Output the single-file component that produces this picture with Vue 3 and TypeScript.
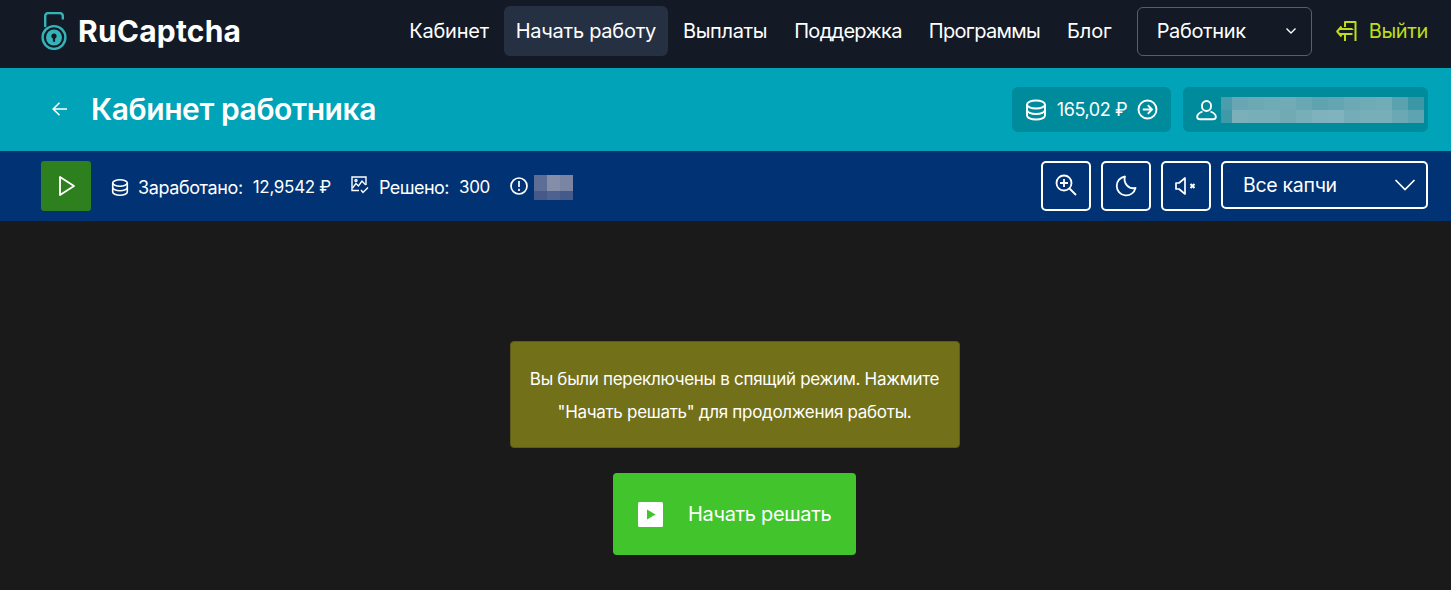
<script setup lang="ts">
const navItems = ['Кабинет', 'Начать работу', 'Выплаты', 'Поддержка', 'Программы', 'Блог']
const nameBlur: string[] = [
  '#4c9dab','#67a6b2','#6ca9b3','#6fabb5','#71abb5','#69a8b2','#5fa3af','#63a5b1','#6ca9b4','#6fabb5','#72acb6','#5ba2af','#3b97a6',
  '#3f9aa8','#7bb0b9','#77aeb8','#77aeb8','#72aab4','#78aeb8','#7fb2bc','#80b3bd','#74acb7','#77aeb8','#77aeb8','#6ba8b4','#5ea3b0',
]
const idBlur: string[] = ['#5c6e95','#858ea9','#7a85a3','#46598a','#4f618f','#465a89']
</script>

<template>
  <div class="page">
    <header class="topbar">
      <div class="brand">
        <svg class="logo" width="26" height="38" viewBox="0 0 26 38" fill="none">
          <path d="M4.2 14 V4 a3 3 0 0 1 3-3 h11.6 a3 3 0 0 1 3 3 v2.5" stroke="#35b3b8" stroke-width="2.4" stroke-linecap="round" />
          <circle cx="13" cy="25.5" r="11.4" stroke="#35b3b8" stroke-width="2.4" />
          <circle cx="13" cy="25.5" r="8" fill="#35b3b8" />
          <circle cx="13" cy="24" r="2.6" fill="#131a25" />
          <rect x="11.9" y="24" width="2.2" height="5.8" fill="#131a25" />
        </svg>
        <span class="brand-name">RuCaptcha</span>
      </div>
      <nav class="nav">
        <a v-for="(item, i) in navItems" :key="item" class="nav-item" :class="{ active: i === 1 }">{{ item }}</a>
      </nav>
      <div class="role">
        <span>Работник</span>
        <svg width="12" height="8" viewBox="0 0 12 8" fill="none"><path d="M1.5 1.5 L6 6 L10.5 1.5" stroke="#fff" stroke-width="1.4" /></svg>
      </div>
      <a class="logout">
        <svg width="22" height="22" viewBox="0 0 22 22" fill="none" stroke="#bfdc1c" stroke-width="2">
          <path d="M9 7 V2 H19.5 V21" stroke-linejoin="round" />
          <path d="M16.5 9 H4 M16.5 14 H4 M9 14 V21 M16.5 9 V10" />
          <path d="M5.5 6.5 L1.2 11.5 L5.5 16.5" stroke-linejoin="round" />
        </svg>
        <span>Выйти</span>
      </a>
    </header>

    <section class="cabinet">
      <div class="cabinet-left">
        <svg width="18" height="16" viewBox="0 0 18 16" fill="none" stroke="#fff" stroke-width="1.6"><path d="M16 8 H2.5 M8.5 1.8 L2.2 8 L8.5 14.2" /></svg>
        <h1>Кабинет работника</h1>
      </div>
      <div class="cabinet-right">
        <div class="chip balance">
          <svg width="22" height="22" viewBox="0 0 22 22" fill="none" stroke="#fff" stroke-width="1.9">
            <ellipse cx="11" cy="5.5" rx="9" ry="4" />
            <path d="M2 5.5 V16.5 C2 18.7 6 20.5 11 20.5 C16 20.5 20 18.7 20 16.5 V5.5" />
            <path d="M2 11 C2 13.2 6 15 11 15 C16 15 20 13.2 20 11" />
          </svg>
          <span>165,02 ₽</span>
          <svg width="21" height="21" viewBox="0 0 21 21" fill="none" stroke="#fff" stroke-width="1.9">
            <circle cx="10.5" cy="10.5" r="9" />
            <path d="M5.8 10.5 H14.5 M10.8 6.2 L15 10.5 L10.8 14.8" />
          </svg>
        </div>
        <div class="chip user">
          <svg width="21" height="22" viewBox="0 0 21 22" fill="none" stroke="#fff" stroke-width="1.9">
            <path d="M6 6.5 a4.5 4.5 0 0 1 9 0 v1 a4.5 4.5 0 0 1 -9 0 z" />
            <path d="M6.5 12.5 C3 14 1 16 1.2 18 C1.3 19.5 2.5 20.3 4 20.3 H17 C18.5 20.3 19.7 19.5 19.8 18 C20 16 18 14 14.5 12.5" />
          </svg>
          <div class="name-blur">
            <i v-for="(c, i) in nameBlur" :key="i" :style="{ background: c }"></i>
          </div>
        </div>
      </div>
    </section>

    <section class="toolbar">
      <button class="play-square">
        <svg width="18" height="22" viewBox="0 0 18 22" fill="none" stroke="#fff" stroke-width="1.9" stroke-linejoin="round"><path d="M2 2 L16 11 L2 20 Z" /></svg>
      </button>
      <div class="stats">
        <div class="stat first">
          <svg width="18" height="17" viewBox="0 0 22 21" fill="none" stroke="#fff" stroke-width="2">
            <ellipse cx="11" cy="5" rx="9" ry="4" />
            <path d="M2 5 V16 C2 18.2 6 20 11 20 C16 20 20 18.2 20 16 V5" />
            <path d="M2 10.5 C2 12.7 6 14.5 11 14.5 C16 14.5 20 12.7 20 10.5" />
          </svg>
          <span class="label">Заработано:</span><span>12,9542 ₽</span>
        </div>
        <div class="stat second">
          <svg width="18" height="18" viewBox="0 0 18 18" fill="none" stroke="#fff" stroke-width="1.4">
            <path d="M8 14.5 H1 V1 H15 V9" />
            <path d="M1.5 12 L5 7.5 L7.5 10 L11 5 L14.8 9" />
            <circle cx="5" cy="4.5" r="1" />
            <path d="M10 14 L12 16.5 L17 11.5" />
          </svg>
          <span class="label">Решено:</span><span>300</span>
        </div>
        <div class="stat third">
          <svg width="18" height="18" viewBox="0 0 18 18" fill="none" stroke="#fff" stroke-width="1.7">
            <circle cx="9" cy="9" r="8" />
            <path d="M9 4 V10 M9 11.8 V14" />
          </svg>
          <div class="id-blur">
            <i v-for="(c, i) in idBlur" :key="i" :style="{ background: c }"></i>
          </div>
        </div>
      </div>
      <div class="tools">
        <button class="tool">
          <svg class="zoom-icon" width="22" height="22" viewBox="0 0 22 22" fill="none" stroke="#fff" stroke-width="1.8">
            <circle cx="9" cy="9" r="7.5" />
            <path d="M14.5 14.5 L21 21 M9 5 V13 M5 9 H13" />
          </svg>
        </button>
        <button class="tool">
          <svg width="22" height="22" viewBox="0 0 22 22" fill="none" stroke="#fff" stroke-width="1.8" stroke-linejoin="round">
            <path d="M10 1.5 A9.5 9.5 0 1 0 20.5 13 A9 9 0 0 1 10 1.5 Z" />
          </svg>
        </button>
        <button class="tool">
          <svg width="22" height="20" viewBox="0 0 22 20" fill="none" stroke="#fff" stroke-width="1.7" stroke-linejoin="round">
            <path d="M1 7 H4 L10 2 V18 L4 13 H1 Z" />
            <path d="M15.5 8 L19.5 12 M19.5 8 L15.5 12" stroke-width="2" />
          </svg>
        </button>
        <div class="select">
          <span>Все капчи</span>
          <svg width="22" height="12" viewBox="0 0 22 12" fill="none" stroke="#fff" stroke-width="1.7"><path d="M1.5 1 L11 10.5 L20.5 1" /></svg>
        </div>
      </div>
    </section>

    <main class="content">
      <div class="notice">Вы были переключены в спящий режим. Нажмите<br />"Начать решать" для продолжения работы.</div>
      <button class="start">
        <svg width="25" height="25" viewBox="0 0 25 25"><rect width="25" height="25" rx="1.5" fill="#fff" /><path d="M9 7.5 L17.5 12.5 L9 17.5 Z" fill="#42c52c" /></svg>
        <span>Начать решать</span>
      </button>
    </main>
  </div>
</template>

<style>
html, body { margin: 0; background: #1a1a1a; }
</style>

<style scoped>
.page {
  width: 1451px;
  height: 590px;
  overflow: hidden;
  display: flex;
  flex-direction: column;
  background: #1a1a1a;
  color: #fff;
  font-family: Inter, "Noto Sans", sans-serif;
}
.topbar {
  height: 68px;
  flex: none;
  display: flex;
  align-items: center;
  background: #131a25;
  padding: 0 23px 6px 41px;
  box-sizing: border-box;
}
.brand { display: flex; align-items: center; gap: 11px; margin-right: auto; }
.brand-name { font-size: 30px; font-weight: 700; letter-spacing: 0.2px; }
.nav { display: flex; align-items: center; gap: 3px; margin-right: 13px; }
.nav-item {
  height: 50px;
  display: flex;
  align-items: center;
  padding: 0 12px;
  border-radius: 6px;
  font-size: 20px;
  letter-spacing: -0.26px;
}
.nav-item:nth-child(3) { letter-spacing: -0.36px; }
.nav-item:nth-child(4),
.nav-item:nth-child(5) { letter-spacing: -0.68px; }
.nav-item:nth-child(6) { letter-spacing: -0.1px; }
.nav-item.active { background: #253143; }
.role {
  width: 175px;
  height: 49px;
  box-sizing: border-box;
  padding: 0 14px 0 19px;
  display: flex;
  align-items: center;
  justify-content: space-between;
  border: 1px solid #566070;
  border-radius: 6px;
  font-size: 20px;
  letter-spacing: -0.36px;
}
.logout {
  margin-left: 24px;
  display: flex;
  align-items: center;
  gap: 11px;
  color: #bfdc1c;
  font-size: 20px;
  letter-spacing: -0.36px;
}
.cabinet {
  height: 83px;
  flex: none;
  display: flex;
  align-items: center;
  justify-content: space-between;
  box-sizing: border-box;
  padding: 0 23px 2px 51px;
  background: #00a3b7;
}
.cabinet-left { display: flex; align-items: center; gap: 22px; }
h1 { margin: 0; font-size: 30px; font-weight: 600; letter-spacing: -0.42px; }
.cabinet-right { display: flex; gap: 12px; margin-bottom: -2px; }
.chip {
  height: 45px;
  display: flex;
  align-items: center;
  box-sizing: border-box;
  background: #008b9c;
  border-radius: 6px;
}
.balance {
  width: 159px;
  padding: 0 13px;
  justify-content: space-between;
  font-size: 18px;
  letter-spacing: -0.4px;
}
.user { width: 245px; padding-left: 13px; gap: 4px; }
.name-blur {
  width: 203px;
  height: 26px;
  display: grid;
  grid-template-columns: 11px repeat(12, 16px);
  grid-template-rows: repeat(2, 13px);
}
.toolbar {
  height: 70px;
  flex: none;
  display: flex;
  align-items: center;
  box-sizing: border-box;
  padding: 0 23px 0 41px;
  background: #003274;
}
.play-square {
  width: 50px;
  height: 50px;
  display: flex;
  align-items: center;
  justify-content: center;
  padding: 0 0 0 2px;
  border: none;
  border-radius: 3px;
  background: #2e7f1e;
}
.stats { display: flex; align-items: center; margin-left: 20px; font-size: 17px; letter-spacing: -0.3px; margin-top: 2px; }
.stat { display: flex; align-items: center; }
.stat svg { margin-right: 10px; }
.first svg { margin-right: 9px; }
.label { margin-right: 10px; font-size: 18px; letter-spacing: -0.4px; }
.second { margin-left: 20px; }
.second svg { margin-top: -5px; }
.second .label { letter-spacing: -0.55px; }
.third { margin-left: 20px; }
.third svg { margin-top: -3px; margin-right: 6px; }
.id-blur {
  width: 39px;
  height: 25px;
  display: grid;
  grid-template-columns: repeat(3, 13px);
  grid-template-rows: 16px 9px;
}
.tools { margin-left: auto; display: flex; gap: 10px; align-items: flex-start; }
.tool {
  width: 50px;
  height: 50px;
  display: flex;
  align-items: center;
  justify-content: center;
  padding: 0;
  border: 2px solid #fff;
  border-radius: 5px;
  background: transparent;
}
.zoom-icon { margin-top: -2px; }
.select {
  width: 207px;
  height: 48px;
  box-sizing: border-box;
  padding: 0 10px 0 20px;
  display: flex;
  align-items: center;
  justify-content: space-between;
  border: 2px solid #fff;
  border-radius: 5px;
  font-size: 19.5px;
  letter-spacing: -0.3px;
}
.content {
  flex: 1;
  display: flex;
  flex-direction: column;
  align-items: center;
  padding: 120px 0 0 18px;
}
.notice {
  width: 450px;
  height: 107px;
  box-sizing: border-box;
  padding-top: 21px;
  border: 1px solid #5e5a1b;
  border-radius: 4px;
  background: #73701a;
  text-align: center;
  font-size: 17px;
  line-height: 33px;
  letter-spacing: -0.3px;
}
.start {
  margin-top: 25px;
  width: 243px;
  height: 82px;
  display: flex;
  align-items: center;
  gap: 25px;
  padding: 0 0 0 25px;
  border: none;
  border-radius: 4px;
  background: #42c52c;
  color: #fff;
  font: inherit;
  font-size: 20px;
  letter-spacing: -0.33px;
}
</style>
